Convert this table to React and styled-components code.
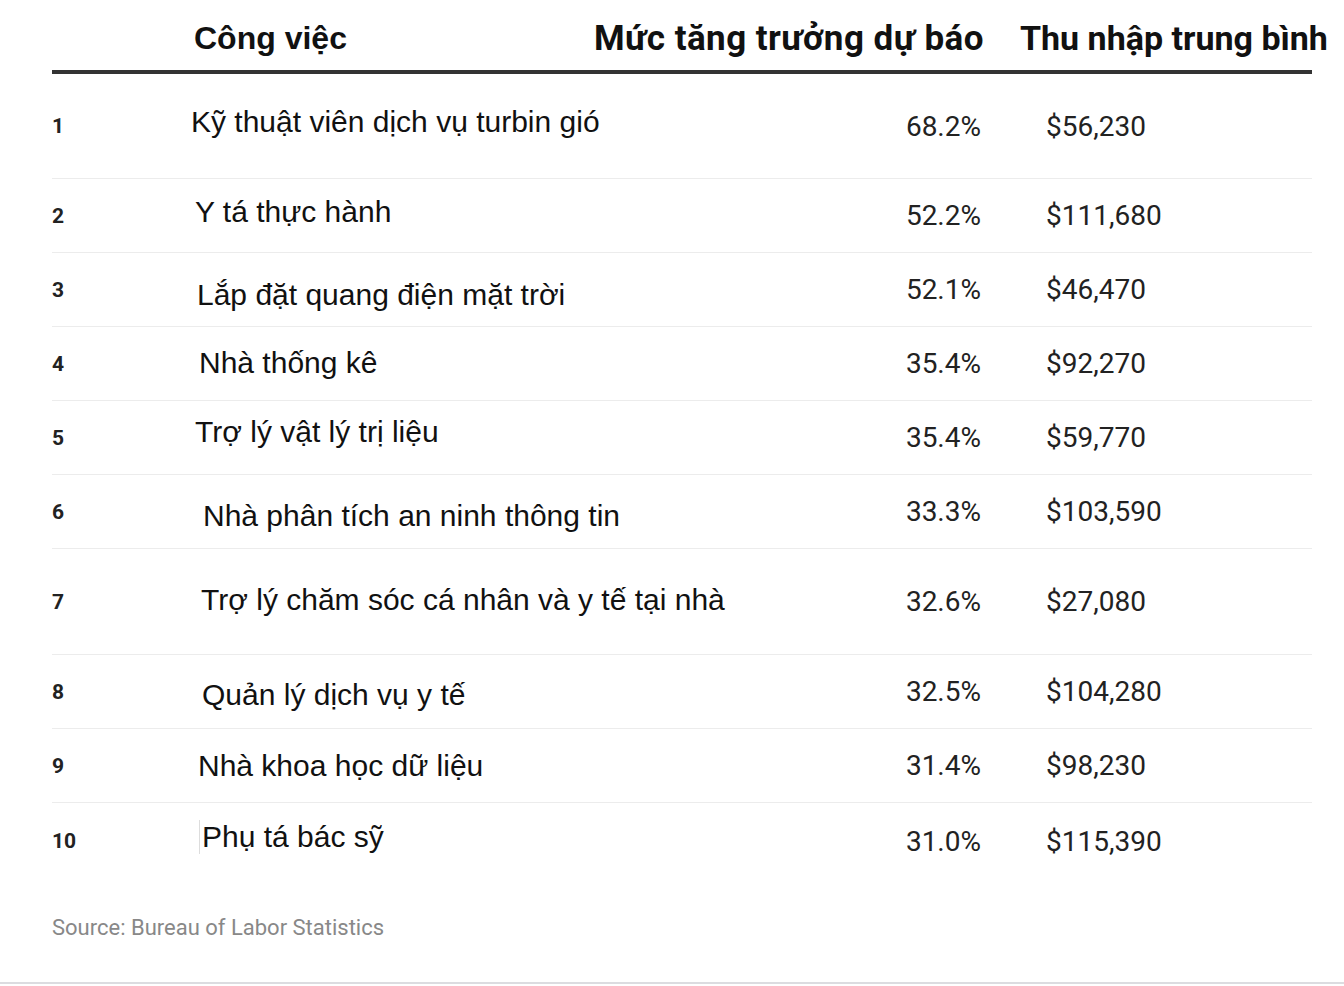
import React from "react";
import styled, { createGlobalStyle } from "styled-components";

const rows = [
  { rank: 1, job: "Kỹ thuật viên dịch vụ turbin gió", growth: "68.2%", pay: "$56,230", height: 105, dx: -3, dy: -4 },
  { rank: 2, job: "Y tá thực hành", growth: "52.2%", pay: "$111,680", height: 74, dx: 1, dy: -4 },
  { rank: 3, job: "Lắp đặt quang điện mặt trời", growth: "52.1%", pay: "$46,470", height: 74, dx: 3, dy: 5 },
  { rank: 4, job: "Nhà thống kê", growth: "35.4%", pay: "$92,270", height: 74, dx: 5, dy: -1 },
  { rank: 5, job: "Trợ lý vật lý trị liệu", growth: "35.4%", pay: "$59,770", height: 74, dx: 1, dy: -6 },
  { rank: 6, job: "Nhà phân tích an ninh thông tin", growth: "33.3%", pay: "$103,590", height: 74, dx: 9, dy: 4 },
  { rank: 7, job: "Trợ lý chăm sóc cá nhân và y tế tại nhà", growth: "32.6%", pay: "$27,080", height: 106, dx: 7, dy: -2 },
  { rank: 8, job: "Quản lý dịch vụ y tế", growth: "32.5%", pay: "$104,280", height: 74, dx: 8, dy: 3 },
  { rank: 9, job: "Nhà khoa học dữ liệu", growth: "31.4%", pay: "$98,230", height: 74, dx: 4, dy: 0 },
  { rank: 10, job: "Phụ tá bác sỹ", growth: "31.0%", pay: "$115,390", height: 76, dx: 8, dy: -4, caret: true },
];

const App = () => {
  return (
    <>
      <GlobalStyle />
      <Page>
        <Table>
          <HeaderRow>
            <span />
            <HeadJob>Công việc</HeadJob>
            <HeadCell $align="flex-end" $size={35} $spacing={0.45}>
              Mức tăng trưởng dự báo
            </HeadCell>
            <span />
            <HeadCell $size={34}>Thu nhập trung bình</HeadCell>
          </HeaderRow>
          {rows.map((r) => (
            <Row key={r.rank} $height={r.height}>
              <Rank>{r.rank}</Rank>
              <JobCell>
                <JobName $dx={r.dx} $dy={r.dy} $caret={r.caret}>
                  {r.job}
                </JobName>
              </JobCell>
              <Growth>{r.growth}</Growth>
              <span />
              <Pay>{r.pay}</Pay>
            </Row>
          ))}
        </Table>
        <Source>Source: Bureau of Labor Statistics</Source>
      </Page>
    </>
  );
};

const GlobalStyle = createGlobalStyle`
  body {
    margin: 0;
    background: #fff;
    font-family: Roboto, "Liberation Sans", sans-serif;
    color: #222;
  }
`;

const Page = styled.div`
  padding: 0 32px 0 52px;
  border-bottom: 2px solid #dcdce0;
  height: 984px;
  box-sizing: border-box;
  overflow: hidden;
`;

const Table = styled.div`
  display: flex;
  flex-direction: column;
`;

const grid = `
  display: grid;
  grid-template-columns: 142px 530px 260px 36px 292px;
  align-items: center;
  box-sizing: border-box;
`;

const HeaderRow = styled.div`
  ${grid}
  height: 74px;
  border-bottom: 4px solid #333;
`;

const HeadJob = styled.div`
  font-family: "Liberation Sans", Arial, sans-serif;
  font-weight: 700;
  font-size: 32px;
  color: #111;
  white-space: nowrap;
  padding-top: 6px;
`;

const HeadCell = styled.div`
  display: flex;
  justify-content: ${(p) => p.$align || "flex-start"};
  font-family: Roboto, sans-serif;
  font-weight: 700;
  font-size: ${(p) => p.$size}px;
  letter-spacing: ${(p) => p.$spacing || 0}px;
  color: #111;
  white-space: nowrap;
  padding-top: 6px;
`;

const Row = styled.div`
  ${grid}
  height: ${(p) => p.$height}px;
  border-bottom: 1px solid #ececec;
  &:last-child {
    border-bottom: none;
  }
`;

const Rank = styled.div`
  font-family: Roboto, sans-serif;
  font-weight: 700;
  font-size: 21px;
  color: #222;
`;

const JobCell = styled.div`
  display: flex;
  align-items: center;
`;

const JobName = styled.div`
  font-family: "Liberation Sans", Arial, sans-serif;
  font-size: 30px;
  color: #111;
  white-space: nowrap;
  transform: translate(${(p) => p.$dx}px, ${(p) => p.$dy}px);
  border-left: ${(p) => (p.$caret ? "1px solid #ddd" : "none")};
  padding-left: ${(p) => (p.$caret ? "2px" : "0")};
  margin-left: ${(p) => (p.$caret ? "-3px" : "0")};
`;

const Growth = styled.div`
  font-family: Roboto, sans-serif;
  font-size: 28px;
  color: #222;
  text-align: right;
  padding-right: 3px;
`;

const Pay = styled.div`
  font-family: Roboto, sans-serif;
  font-size: 28px;
  color: #222;
  padding-left: 26px;
`;

const Source = styled.div`
  margin-top: 36px;
  font-family: Roboto, sans-serif;
  font-size: 22px;
  color: #888;
`;

export default App;
